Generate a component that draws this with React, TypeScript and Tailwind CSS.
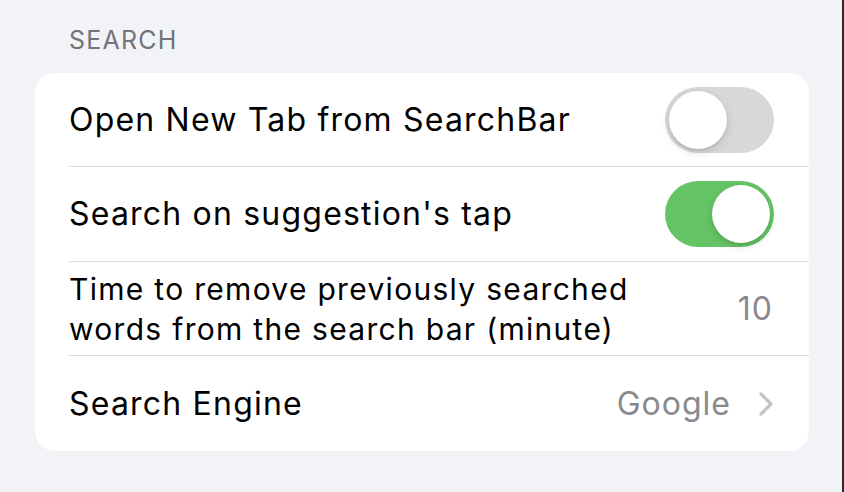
import React from 'react';

const Toggle: React.FC<{ on: boolean }> = ({ on }) => (
  <div
    className={`relative h-[66px] w-[109px] shrink-0 rounded-full ${
      on ? 'bg-[#65c466]' : 'bg-[#d8d8db]'
    }`}
  >
    <div
      className={`absolute top-[4px] h-[58px] w-[58px] rounded-full bg-white shadow-[0_3px_8px_rgba(0,0,0,0.15),0_2px_1px_rgba(0,0,0,0.06)] ${
        on ? 'left-[47px]' : 'left-[4px]'
      }`}
    />
  </div>
);

const App: React.FC = () => {
  return (
    <div
      className="h-[492px] w-[844px] overflow-hidden border-r-2 border-[#2b2b2b] bg-[#f2f3f6] pt-[25px] text-black"
      style={{ fontFamily: 'Inter, "Noto Sans", sans-serif' }}
    >
      <div className="pl-[69px] text-[25px] leading-[30px] tracking-[1.2px] text-[#737378]">SEARCH</div>

      <div className="ml-[35px] mr-[33px] mt-[18px] rounded-[20px] bg-white pl-[34px]">
        {/* Row 1 */}
        <div className="flex h-[94px] items-center justify-between border-b border-[#dcdcdf] pr-[35px]">
          <span className="text-[32px] tracking-[1.2px]">Open New Tab from SearchBar</span>
          <Toggle on={false} />
        </div>

        {/* Row 2 */}
        <div className="flex h-[95px] items-center justify-between border-b border-[#dcdcdf] pr-[35px]">
          <span className="text-[32px] tracking-[1.2px]">Search on suggestion's tap</span>
          <Toggle on={true} />
        </div>

        {/* Row 3 */}
        <div className="flex h-[94px] items-center justify-between border-b border-[#dcdcdf] pr-[36px]">
          <span className="text-[30px] leading-[40px] tracking-[1.3px]">
            Time to remove previously searched
            <br />
            words from the search bar (minute)
          </span>
          <span className="text-[32px] tracking-[1px] text-[#8a8a8e]">10</span>
        </div>

        {/* Row 4 */}
        <div className="flex h-[95px] items-center justify-between pr-[36px]">
          <span className="text-[32px] tracking-[1.2px]">Search Engine</span>
          <div className="flex items-center gap-[28px]">
            <span className="text-[32px] tracking-[1px] text-[#8a8a8e]">Google</span>
            <svg width="14" height="24" viewBox="0 0 14 24" fill="none">
              <path d="M2 2l10 10L2 22" stroke="#c4c4c7" strokeWidth="3.2" strokeLinecap="round" strokeLinejoin="round" />
            </svg>
          </div>
        </div>
      </div>
    </div>
  );
};

export default App;
